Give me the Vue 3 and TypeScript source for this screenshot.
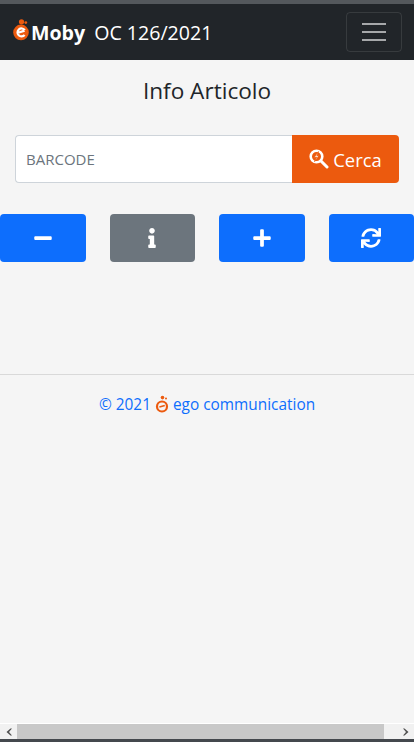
<script setup lang="ts">
const actions = [
  { key: 'minus', cls: 'primary', vb: '0 0 448 512', w: 18, d: 'M416 208H32c-17.67 0-32 14.33-32 32v32c0 17.67 14.33 32 32 32h384c17.67 0 32-14.33 32-32v-32c0-17.67-14.33-32-32-32z' },
  { key: 'info', cls: 'secondary', vb: '0 0 192 512', w: 8, d: 'M20 424.229h20V279.771H20c-11.046 0-20-8.954-20-20V212c0-11.046 8.954-20 20-20h112c11.046 0 20 8.954 20 20v212.229h20c11.046 0 20 8.954 20 20V492c0 11.046-8.954 20-20 20H20c-11.046 0-20-8.954-20-20v-47.771c0-11.046 8.954-20 20-20zM96 0C56.235 0 24 32.235 24 72s32.235 72 72 72 72-32.235 72-72S135.764 0 96 0z' },
  { key: 'plus', cls: 'primary', vb: '0 0 448 512', w: 18, d: 'M416 208H272V64c0-17.67-14.33-32-32-32h-32c-17.67 0-32 14.33-32 32v144H32c-17.67 0-32 14.33-32 32v32c0 17.67 14.33 32 32 32h144v144c0 17.67 14.33 32 32 32h32c17.67 0 32-14.33 32-32V304h144c17.67 0 32-14.33 32-32v-32c0-17.67-14.33-32-32-32z' },
  { key: 'sync', cls: 'primary', vb: '0 0 512 512', w: 20, d: 'M440.65 12.57l4 82.77A247.16 247.16 0 0 0 255.83 8C134.73 8 33.91 94.92 12.29 209.82A12 12 0 0 0 24.09 224h49.05a12 12 0 0 0 11.67-9.26 175.91 175.91 0 0 1 317-56.94l-101.46-4.86a12 12 0 0 0-12.57 12v47.41a12 12 0 0 0 12 12H500a12 12 0 0 0 12-12V12a12 12 0 0 0-12-12h-47.37a12 12 0 0 0-11.98 12.57zM255.83 432a175.61 175.61 0 0 1-146-77.8l101.8 4.87a12 12 0 0 0 12.57-12v-47.4a12 12 0 0 0-12-12H12a12 12 0 0 0-12 12V500a12 12 0 0 0 12 12h47.35a12 12 0 0 0 12-12.6l-4.15-82.57A247.17 247.17 0 0 0 255.83 504c121.11 0 221.93-86.92 243.55-201.82a12 12 0 0 0-11.8-14.18h-49.05a12 12 0 0 0-11.67 9.26A175.86 175.86 0 0 1 255.83 432z' },
]
</script>

<template>
  <div class="page">
    <div class="topstrip"></div>
    <nav class="navbar">
      <div class="brand">
        <svg class="logo" viewBox="0 0 18 22" width="18" height="22">
          <circle cx="8.5" cy="2.8" r="2.6" fill="#ec5a0e" />
          <circle cx="12.8" cy="3.6" r="1.4" fill="#ec5a0e" />
          <circle cx="8" cy="13.4" r="7.8" fill="#ec5a0e" />
          <path d="M4.4 14 L11.6 11.6 M11.8 11.2 A4 4 0 1 0 11.6 16" fill="none" stroke="#fff" stroke-width="2.2" />
        </svg>
        <span class="moby">Moby</span>
        <span class="order">OC 126/2021</span>
      </div>
      <button class="toggler" type="button">
        <span></span><span></span><span></span>
      </button>
    </nav>

    <h1 class="title">Info Articolo</h1>

    <div class="search">
      <input class="barcode" type="text" placeholder="BARCODE" />
      <button class="cerca" type="button">
        <svg viewBox="0 0 20 20" width="20" height="20">
          <circle cx="7.5" cy="7.5" r="5.8" fill="none" stroke="#fff" stroke-width="2.6" />
          <path d="M9.4 2.6 L5.2 8.2 H7.6 L5.6 12.6 L10 6.8 H7.8 Z" fill="#fff" stroke="#ec5a0e" stroke-width="0.8" />
          <path d="M12 12 L18 18" stroke="#fff" stroke-width="3" stroke-linecap="round" />
        </svg>
        Cerca
      </button>
    </div>

    <div class="actions">
      <button v-for="a in actions" :key="a.key" class="action" :class="a.cls" type="button">
        <svg :viewBox="a.vb" :width="a.w" height="20"><path fill="#fff" :d="a.d" /></svg>
      </button>
    </div>

    <hr class="divider" />

    <footer class="footer">
      <span>© 2021</span>
      <svg viewBox="0 0 14 18" width="14" height="18">
        <circle cx="7.5" cy="2.6" r="1.8" fill="#ec5a0e" />
        <circle cx="11" cy="3.6" r="1" fill="#ec5a0e" />
        <circle cx="7" cy="11.5" r="5" fill="none" stroke="#ec5a0e" stroke-width="2.2" />
        <path d="M4.4 12 L9.8 10.4" stroke="#ec5a0e" stroke-width="1.6" />
      </svg>
      <span>ego communication</span>
    </footer>

    <div class="spacer"></div>

    <div class="hscroll">
      <span class="arrow">
        <svg viewBox="0 0 8 8" width="8" height="8"><path d="M5.5 0.5 L1.5 4 L5.5 7.5 L7 7.5 L4 4 L7 0.5 Z" fill="#505050" /></svg>
      </span>
      <div class="track"><div class="thumb"></div></div>
      <span class="arrow">
        <svg viewBox="0 0 8 8" width="8" height="8"><path d="M2.5 0.5 L6.5 4 L2.5 7.5 L1 7.5 L4 4 L1 0.5 Z" fill="#505050" /></svg>
      </span>
    </div>
    <div class="bottomstrip"></div>
  </div>
</template>

<style>
body {
  margin: 0;
  overflow: hidden;
}
</style>

<style scoped>
.page {
  height: 742px;
  display: flex;
  flex-direction: column;
  background: #f5f5f5;
  font-family: "Open Sans", "Liberation Sans", sans-serif;
  color: #212529;
}
.topstrip {
  height: 4px;
  background: #54585c;
}
.navbar {
  height: 56px;
  background: #212529;
  display: flex;
  align-items: center;
  justify-content: space-between;
  padding: 0 12px 0 13px;
}
.brand {
  display: flex;
  align-items: center;
  color: #fff;
}
.logo {
  margin-top: -4px;
}
.moby {
  font-size: 19.6px;
  font-weight: 700;
}
.order {
  font-size: 19.6px;
  margin-left: 9px;
}
.toggler {
  width: 56px;
  height: 40px;
  margin-top: -1px;
  padding: 0;
  background: transparent;
  border: 1px solid rgba(255, 255, 255, 0.1);
  border-radius: 4px;
  display: flex;
  flex-direction: column;
  align-items: center;
  justify-content: center;
  gap: 6px;
}
.toggler span {
  width: 24px;
  height: 2px;
  background: #a6a8aa;
}
.title {
  margin: 16px 0 0;
  height: 30px;
  line-height: 30px;
  font-size: 22.6px;
  font-weight: 400;
  text-align: center;
}
.search {
  display: flex;
  margin: 29px 15px 0;
  height: 48px;
}
.barcode {
  flex: 1;
  min-width: 0;
  box-sizing: border-box;
  padding: 0 10px;
  background: #fff;
  border: 1px solid #ced4da;
  border-right: 0;
  border-radius: 4px 0 0 4px;
  font: inherit;
  font-size: 15px;
  outline: none;
}
.barcode::placeholder {
  color: #6c757d;
  opacity: 1;
}
.cerca {
  width: 107px;
  padding: 0;
  background: #ec5a0e;
  border: 0;
  border-radius: 0 4px 4px 0;
  color: #fff;
  font: inherit;
  font-size: 18.4px;
  display: flex;
  align-items: center;
  justify-content: center;
  gap: 4px;
}
.actions {
  display: grid;
  grid-template-columns: repeat(4, 1fr);
  gap: 24px;
  margin-top: 31px;
}
.action {
  height: 48px;
  padding: 0;
  border: 0;
  border-radius: 4px;
  display: flex;
  align-items: center;
  justify-content: center;
}
.primary {
  background: #0d6efd;
}
.secondary {
  background: #6c757d;
}
.divider {
  margin: 112px 0 0;
  height: 1px;
  border: 0;
  background: #d9d9d9;
}
.footer {
  margin-top: 18px;
  height: 22px;
  display: flex;
  align-items: center;
  justify-content: center;
  gap: 4px;
  font-size: 15.4px;
  color: #0d6efd;
}
.spacer {
  flex: 1;
}
.hscroll {
  height: 15px;
  display: flex;
  background: #f1f1f1;
  border-top: 1px solid #fff;
}
.arrow {
  width: 17px;
  display: flex;
  align-items: center;
  justify-content: center;
}
.track {
  flex: 1;
}
.thumb {
  width: 367px;
  height: 100%;
  background: #c8c8c8;
}
.bottomstrip {
  height: 3px;
  background: #44484d;
}
</style>
